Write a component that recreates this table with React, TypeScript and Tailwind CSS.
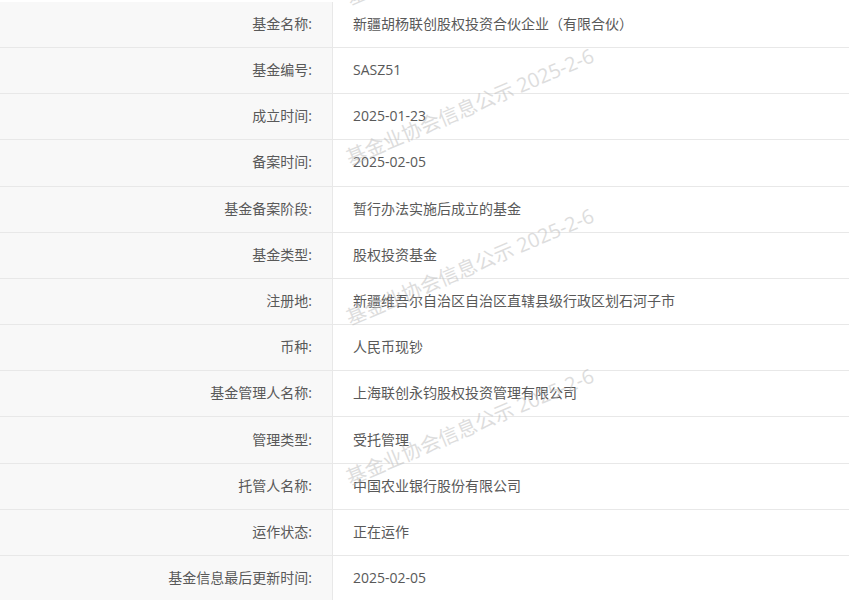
import React from "react";

const rows: [string, string][] = [
  ["基金名称:", "新疆胡杨联创股权投资合伙企业（有限合伙）"],
  ["基金编号:", "SASZ51"],
  ["成立时间:", "2025-01-23"],
  ["备案时间:", "2025-02-05"],
  ["基金备案阶段:", "暂行办法实施后成立的基金"],
  ["基金类型:", "股权投资基金"],
  ["注册地:", "新疆维吾尔自治区自治区直辖县级行政区划石河子市"],
  ["币种:", "人民币现钞"],
  ["基金管理人名称:", "上海联创永钧股权投资管理有限公司"],
  ["管理类型:", "受托管理"],
  ["托管人名称:", "中国农业银行股份有限公司"],
  ["运作状态:", "正在运作"],
  ["基金信息最后更新时间:", "2025-02-05"],
];

const marks = ["top-[-53px]", "top-[107px]", "top-[267px]", "top-[427px]"];

export default function App() {
  return (
    <div
      className="relative w-[849px] h-[600px] overflow-hidden bg-white pt-[1.8px] text-[14px] text-[#595959]"
      style={{ fontFamily: '"Open Sans", "Noto Sans CJK SC", sans-serif' }}
    >
      {rows.map(([label, value], i) => (
        <div key={i} className="flex h-[46.2px] border-b border-[#e8e8e8]">
          <div className="w-[333px] shrink-0 bg-[#f8f8f8] border-r border-[#e8e8e8] flex items-center justify-end pr-[20px] pb-[2px]">
            {label}
          </div>
          <div className="flex-1 flex items-center pl-[20px] pb-[2px]">{value}</div>
        </div>
      ))}
      {marks.map((t, i) => (
        <div
          key={i}
          className={`pointer-events-none absolute left-[470px] ${t} -translate-x-1/2 -translate-y-1/2 -rotate-[23deg] whitespace-nowrap text-[20px] text-[#bdbdbd] opacity-50`}
        >
          基金业协会信息公示 2025-2-6
        </div>
      ))}
    </div>
  );
}
